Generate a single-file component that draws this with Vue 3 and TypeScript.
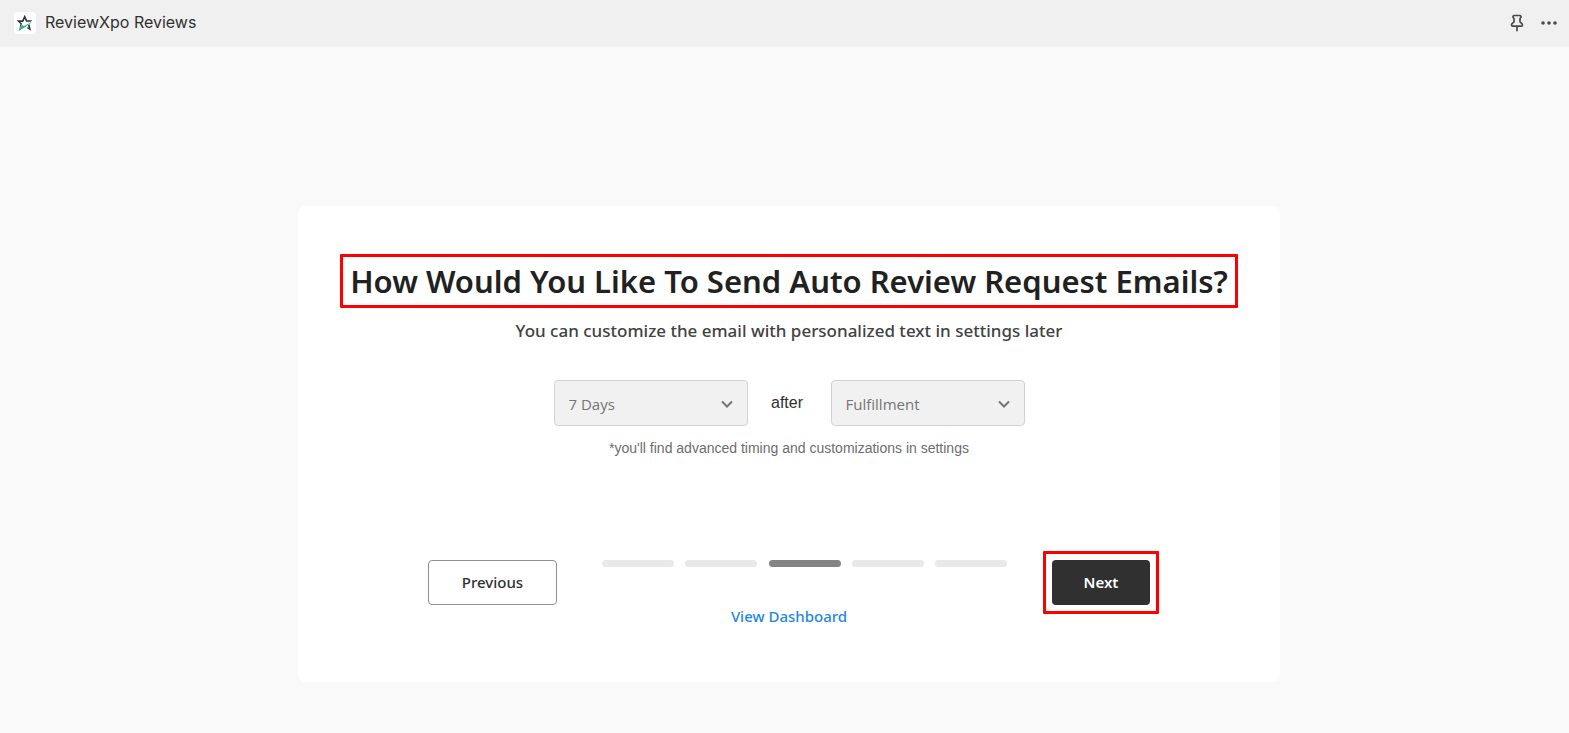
<script setup lang="ts">
import { ref } from 'vue'

const delay = ref('7 Days')
const trigger = ref('Fulfillment')
const delays: string[] = ['7 Days', '14 Days', '30 Days']
const triggers: string[] = ['Fulfillment', 'Delivery', 'Purchase']
const step = ref(3)
const steps = 5
</script>

<template>
  <div class="page">
    <header class="topbar">
      <span class="logo">
        <svg viewBox="0 0 22 22" width="22" height="22" aria-hidden="true">
          <path d="M2.600 8.200H8.200L10.700 2.800 13.200 8.200H18.400L16.500 9.800H12L10.700 6.800 9.300 9.900H6.200L8 11.600 7.200 14.200 5.700 15.200 6.400 12z" fill="#333" />
          <path d="M13.800 13.400l1.800-1.200 1.400 6.600-4.200-2.800 1-.8 1 .6z" fill="#333" />
          <path d="M18.800 9.200 11.300 15 9 16.200 4.600 19.200 5.600 15.800 8.400 13.300 10.200 14z" fill="#25b183" />
        </svg>
      </span>
      <span class="app-name">ReviewXpo Reviews</span>
      <div class="tools">
        <button class="icon-button" type="button" aria-label="Pin">
          <svg viewBox="0 0 16 18" width="16" height="18" aria-hidden="true">
            <path d="M5.200 1.500h5.600a1.300 1.300 0 0 1 .9 2.200L11 4.500v3.400l1.900 1.700c1 1 .6 2.600-.8 2.600H3.900c-1.400 0-1.800-1.600-.8-2.600L5 7.900V4.500L4.300 3.700A1.300 1.300 0 0 1 5.200 1.500zM8 12.200V16.600" fill="none" stroke="#4a4a4a" stroke-width="1.700" stroke-linecap="round" stroke-linejoin="round" />
          </svg>
        </button>
        <button class="icon-button" type="button" aria-label="More actions">
          <svg viewBox="0 0 16 18" width="16" height="18" aria-hidden="true" fill="#4a4a4a">
            <circle cx="2" cy="9" r="1.800" /><circle cx="8" cy="9" r="1.800" /><circle cx="14" cy="9" r="1.800" />
          </svg>
        </button>
      </div>
    </header>

    <main class="stage">
      <section class="card">
        <h1>How Would You Like To Send Auto Review Request Emails?</h1>
        <p class="subtitle">You can customize the email with personalized text in settings later</p>

        <div class="timing">
          <div class="picker">
            <select v-model="delay" aria-label="Delay">
              <option v-for="d in delays" :key="d">{{ d }}</option>
            </select>
            <svg class="chevron" viewBox="0 0 12 8" aria-hidden="true"><path d="M1 1.500 6 6.500l5-5" /></svg>
          </div>
          <span class="after">after</span>
          <div class="picker">
            <select v-model="trigger" aria-label="Trigger">
              <option v-for="t in triggers" :key="t">{{ t }}</option>
            </select>
            <svg class="chevron" viewBox="0 0 12 8" aria-hidden="true"><path d="M1 1.500 6 6.500l5-5" /></svg>
          </div>
        </div>
        <p class="note">*you'll find advanced timing and customizations in settings</p>

        <div class="wizard">
          <button class="btn previous" type="button" @click="step = Math.max(1, step - 1)">Previous</button>
          <div class="steps">
            <span v-for="n in steps" :key="n" class="step" :class="{ current: n === step }"></span>
          </div>
          <div class="highlight">
            <button class="btn next" type="button" @click="step = Math.min(steps, step + 1)">Next</button>
          </div>
        </div>
        <a class="dashboard" href="#">View Dashboard</a>
      </section>
    </main>
  </div>
</template>

<style>
body {
  margin: 0;
  background: #f9f9f9;
}
</style>

<style scoped>
* {
  box-sizing: border-box;
}
.page {
  min-height: 100vh;
  background: #f9f9f9;
  font-family: "Liberation Sans", Arial, sans-serif;
}
.topbar {
  display: flex;
  align-items: center;
  height: 47px;
  padding: 0 12px 2px 14px;
  background: #f0f0f0;
}
.logo {
  display: flex;
  border-radius: 4px;
  background: #fff;
}
.app-name {
  margin-left: 9px;
  padding-bottom: 2px;
  color: #303030;
  font: 400 16px/20px Inter, sans-serif;
}
.tools {
  display: flex;
  gap: 16px;
  margin-left: auto;
}
.icon-button {
  display: flex;
  padding: 0;
  border: 0;
  background: none;
}
.stage {
  display: flex;
  justify-content: center;
  padding: 159px 0 48px 9px;
}
.card {
  display: flex;
  flex-direction: column;
  align-items: center;
  width: 90%;
  max-width: 982px;
  padding: 48px 32px 54px;
  border-radius: 8px;
  background: #fff;
}
h1 {
  margin: 0;
  padding: 0 7px;
  border: 3px solid #f00;
  border-radius: 1px;
  color: #212121;
  font: 600 31px/48px "Noto Sans", sans-serif;
}
.subtitle {
  margin: 11px 0 0;
  color: #424242;
  font: 500 17px/24px "Noto Sans", sans-serif;
}
.timing {
  display: flex;
  align-items: center;
  margin-top: 37px;
}
.picker {
  position: relative;
  width: 194px;
}
select {
  display: block;
  width: 100%;
  height: 46px;
  padding: 2px 40px 0 14px;
  border: 1px solid #d2d2d2;
  border-radius: 4px;
  appearance: none;
  background: #f1f1f1;
  color: #757575;
  font: 400 15px/24px "Open Sans", sans-serif;
}
.chevron {
  position: absolute;
  top: 20px;
  right: 15px;
  width: 12px;
  height: 8px;
  fill: none;
  stroke: #757575;
  stroke-width: 2;
  pointer-events: none;
}
.after {
  width: 83px;
  padding-right: 4px;
  color: #303030;
  font-size: 16px;
  line-height: 24px;
  text-align: center;
}
.note {
  margin: 12px 0 0;
  color: #6d6d6d;
  font-size: 14px;
  line-height: 20px;
}
.wizard {
  display: flex;
  align-items: flex-start;
  gap: 45px;
  margin-top: 102px;
}
.btn {
  height: 45px;
  padding: 0 0 2px;
  border-radius: 4px;
  font: 500 15px/24px "Noto Sans", sans-serif;
}
.previous {
  width: 129px;
  border: 1px solid #8f8f8f;
  background: #fff;
  color: #303030;
}
.highlight {
  display: flex;
  margin: -9px;
  padding: 6px;
  border: 3px solid #f00;
  border-radius: 1px;
}
.next {
  width: 98px;
  border: 0;
  background: #303030;
  color: #fff;
  font-weight: 600;
}
.steps {
  display: flex;
  justify-content: space-between;
  width: 405px;
}
.step {
  width: 72px;
  height: 7px;
  border-radius: 4px;
  background: #e9e9e9;
}
.current {
  background: #848484;
}
.dashboard {
  margin-top: -1px;
  color: #1e88e5;
  font: 500 15px/24px "Noto Sans", sans-serif;
  text-decoration: none;
}
</style>
